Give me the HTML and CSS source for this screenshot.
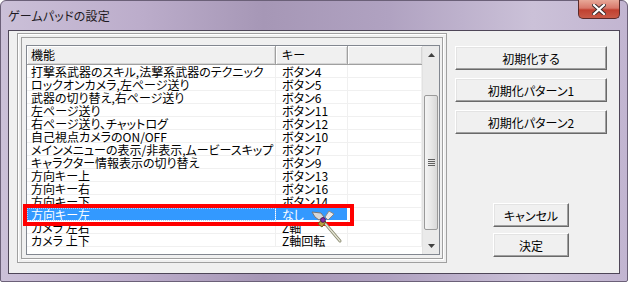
FILE: index.html
```html
<!DOCTYPE html>
<html lang="ja">
<head>
    <meta charset="UTF-8">
    <meta name="viewport" content="width=device-width, initial-scale=1.0">
    <title>ゲームパッドの設定</title>
    <link rel="stylesheet" href="styles.css">
</head>
<body>

<div class="window">
    <!-- Title bar -->
    <div class="titlebar">
        <span class="title">ゲームパッドの設定</span>
        <button class="close" aria-label="閉じる">
            <svg width="14" height="11" viewBox="0 0 14 11">
                <path d="M2 1 L12 10 M12 1 L2 10" stroke="#3a2a2a" stroke-width="4" stroke-linecap="square"/>
                <path d="M2 1 L12 10 M12 1 L2 10" stroke="#ffffff" stroke-width="2.2" stroke-linecap="square"/>
            </svg>
        </button>
    </div>

    <div class="client">
        <!-- Key list -->
        <div class="frame">
            <div class="frame-inner">
                <div class="listview">
                    <div class="list-body">
                        <div class="header">
                            <div class="hcell c1">機能</div>
                            <div class="hcell c2">キー</div>
                            <div class="hcell c3"></div>
                        </div>
                        <div class="row"><div class="cell c1">打撃系武器のスキル,法撃系武器のテクニック</div><div class="cell c2">ボタン4</div><div class="cell c3"></div></div>
                        <div class="row"><div class="cell c1">ロックオンカメラ,左ページ送り</div><div class="cell c2">ボタン5</div><div class="cell c3"></div></div>
                        <div class="row"><div class="cell c1">武器の切り替え,右ページ送り</div><div class="cell c2">ボタン6</div><div class="cell c3"></div></div>
                        <div class="row"><div class="cell c1">左ページ送り</div><div class="cell c2">ボタン11</div><div class="cell c3"></div></div>
                        <div class="row"><div class="cell c1">右ページ送り、チャットログ</div><div class="cell c2">ボタン12</div><div class="cell c3"></div></div>
                        <div class="row"><div class="cell c1">自己視点カメラのON/OFF</div><div class="cell c2">ボタン10</div><div class="cell c3"></div></div>
                        <div class="row"><div class="cell c1">メインメニューの表示/非表示,ムービースキップ</div><div class="cell c2">ボタン7</div><div class="cell c3"></div></div>
                        <div class="row"><div class="cell c1">キャラクター情報表示の切り替え</div><div class="cell c2">ボタン9</div><div class="cell c3"></div></div>
                        <div class="row"><div class="cell c1">方向キー上</div><div class="cell c2">ボタン13</div><div class="cell c3"></div></div>
                        <div class="row"><div class="cell c1">方向キー右</div><div class="cell c2">ボタン16</div><div class="cell c3"></div></div>
                        <div class="row"><div class="cell c1">方向キー下</div><div class="cell c2">ボタン14</div><div class="cell c3"></div></div>
                        <div class="row selected"><div class="cell c1">方向キー左</div><div class="cell c2">なし</div><div class="cell c3"></div></div>
                        <div class="row"><div class="cell c1">カメラ 左右</div><div class="cell c2">Z軸</div><div class="cell c3"></div></div>
                        <div class="row"><div class="cell c1">カメラ 上下</div><div class="cell c2">Z軸回転</div><div class="cell c3"></div></div>
                    </div>
                    <div class="scrollbar">
                        <div class="sb-arrow">
                            <svg width="7" height="4" viewBox="0 0 7 4"><path d="M0 4 L3.5 0 L7 4 Z" fill="#404040"/></svg>
                        </div>
                        <div class="sb-track">
                            <div class="sb-thumb">
                                <span class="grip"></span><span class="grip"></span><span class="grip"></span><span class="grip"></span>
                            </div>
                        </div>
                        <div class="sb-arrow">
                            <svg width="7" height="4" viewBox="0 0 7 4"><path d="M0 0 L7 0 L3.5 4 Z" fill="#404040"/></svg>
                        </div>
                    </div>
                </div>

                <!-- annotation over the selected row -->
                <div class="highlight"></div>
                <svg class="cursor" width="34" height="36" viewBox="0 0 34 36">
                    <path d="M14 13 L31 33" stroke="#8a8a70" stroke-width="3" stroke-linecap="round"/>
                    <path d="M14 13 L31 33" stroke="#e6e6d8" stroke-width="1.2" stroke-linecap="round"/>
                    <path d="M3 4 L12 5 L15 9 L10 12 L6 9 Z" fill="#d8d8d8" stroke="#777" stroke-width="1"/>
                    <path d="M20 3 L25 6 L19 12 L16 9 Z" fill="#e8e8e8" stroke="#888" stroke-width="1"/>
                    <path d="M9 16 L13 11 L17 14 L13 19 Z" fill="#b8a040" stroke="#6a5a20" stroke-width="1"/>
                    <circle cx="14" cy="12" r="2.4" fill="#8a2aa0" stroke="#40104a" stroke-width="0.8"/>
                </svg>
            </div>
        </div>

        <!-- Buttons -->
        <div class="side">
            <div class="side-top">
                <button class="btn wide">初期化する</button>
                <button class="btn wide">初期化パターン1</button>
                <button class="btn wide">初期化パターン2</button>
            </div>
            <div class="side-bottom">
                <button class="btn small">キャンセル</button>
                <button class="btn small">決定</button>
            </div>
        </div>
    </div>
</div>

</body>
</html>
```

FILE: styles.css
```css
/* Basic Reset */
* {
    margin: 0;
    padding: 0;
    box-sizing: border-box;
}
body {
    font-family: "Noto Sans CJK JP", "Noto Sans", sans-serif;
    font-size: 12px;
    background-color: #ffffff;
    color: #000;
}
button {
    font-family: inherit;
    font-size: 12px;
    color: #000;
}

/* Window frame */
.window {
    width: 628px;
    height: 282px;
    display: flex;
    flex-direction: column;
    padding: 0 7px 7px 7px;
    border: 1px solid #6b6078;
    border-radius: 6px 6px 2px 2px;
    background: linear-gradient(90deg, #cbc0d8 0%, #bcadcb 22%, #a697b6 42%, #b0a2c1 62%, #cbc1d8 85%, #c2b5d1 100%);
}
.titlebar {
    height: 29px;
    display: flex;
    align-items: flex-start;
    justify-content: space-between;
}
.title {
    font-feature-settings: "palt";
    color: #1e1a22;
    padding-top: 6px;
    letter-spacing: 0.2px;
}
.close {
    width: 42px;
    height: 19px;
    margin-top: -1px;
    margin-right: 0;
    border: 1px solid #5a2a2a;
    border-top: none;
    border-radius: 0 0 5px 5px;
    background: linear-gradient(180deg, #e8a898 0%, #d8786a 45%, #c04030 55%, #c85a48 100%);
    display: flex;
    align-items: center;
    justify-content: center;
}

/* Client area */
.client {
    flex: 1;
    display: flex;
    background-color: #f0f0f0;
    border: 1px solid #4e4658;
    padding: 2px 12px 10px 8px;
    gap: 8px;
}

/* Etched frame around the list */
.frame {
    width: 432px;
    border: 1px solid #a0a0a0;
    box-shadow: inset 1px 1px 0 #ffffff;
    padding: 3px;
    align-self: stretch;
}
.frame-inner {
    position: relative;
    height: 100%;
    border: 1px solid #a0a0a0;
    box-shadow: 1px 1px 0 #ffffff;
    padding: 7px 2px 3px 4px;
}

/* List view */
.listview {
    height: 100%;
    display: flex;
    border: 1px solid #828790;
    background-color: #ffffff;
}
.list-body {
    flex: 1;
    overflow: hidden;
    font-feature-settings: "palt";
}
.header {
    display: flex;
    height: 19px;
    border-bottom: 1px solid #a0a0a0;
}
.hcell {
    line-height: 18px;
    background-color: #f0f0f0;
    border-right: 1px solid #a0a0a0;
    box-shadow: inset 1px 1px 0 #ffffff, inset -1px -1px 0 #d5d5d5;
    padding-left: 4px;
    white-space: nowrap;
}
.c1 { width: 249px; }
.c2 { width: 72px; padding-left: 6px; }
.c3 { flex: 1; }
.hcell.c3 { border-right: none; }

.row {
    display: flex;
    height: 13px;
}
.cell {
    line-height: 13px;
    white-space: nowrap;
    padding-left: 4px;
    box-shadow: inset -1px -1px 0 #f0f0f0;
}
.cell.c2 { padding-left: 6px; }
.row.selected .c1,
.row.selected .c2 {
    background-color: #3399ff;
    color: #ffffff;
    box-shadow: inset -1px 0 0 #ffffff, inset 0 -1px 0 #ffffff;
}
.row.selected .c1 {
    outline: 1px dotted #a8d0ff;
    outline-offset: -1px;
}

/* Scrollbar */
.scrollbar {
    width: 17px;
    display: flex;
    flex-direction: column;
    background-color: #eaeaea;
    border-left: 1px solid #e2e2e2;
}
.sb-arrow {
    height: 17px;
    display: flex;
    align-items: center;
    justify-content: center;
}
.sb-track {
    flex: 1;
    padding: 32px 1px 6px 1px;
}
.sb-thumb {
    height: 135px;
    border: 1px solid #9a9a9a;
    border-radius: 2px;
    background: linear-gradient(90deg, #f4f4f4 0%, #e8e8e8 50%, #d8d8d8 100%);
    display: flex;
    flex-direction: column;
    align-items: center;
    justify-content: center;
    gap: 1px;
}
.grip {
    width: 7px;
    height: 1px;
    background-color: #606060;
}

/* Red annotation box and cursor */
.highlight {
    position: absolute;
    left: 1px;
    top: 166px;
    width: 331px;
    height: 22px;
    border: 4px solid #ff0000;
}
.cursor {
    position: absolute;
    left: 287px;
    top: 170px;
}

/* Buttons */
.side {
    flex: 1;
    display: flex;
    flex-direction: column;
    justify-content: space-between;
    padding: 13px 0 6px 0;
}
.side-top {
    display: flex;
    flex-direction: column;
    gap: 8px;
}
.side-bottom {
    display: flex;
    flex-direction: column;
    align-items: center;
    gap: 6px;
}
.btn {
    height: 24px;
    background-color: #f0f0f0;
    border: 1px solid;
    border-color: #ffffff #696969 #696969 #ffffff;
    box-shadow: inset -1px -1px 0 #a0a0a0, inset 1px 1px 0 #e3e3e3;
    font-feature-settings: "palt";
}
.btn.wide {
    width: 152px;
}
.btn.small {
    width: 76px;
}
```
